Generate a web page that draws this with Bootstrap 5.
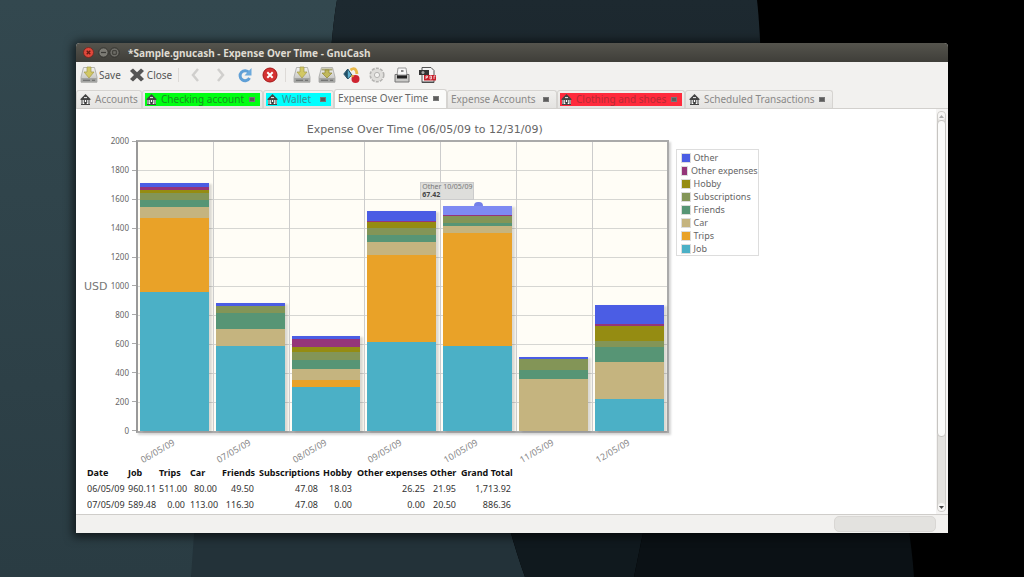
<!DOCTYPE html>
<html lang="en">
<head>
<meta charset="utf-8">
<meta name="viewport" content="width=device-width, initial-scale=1">
<title>*Sample.gnucash - Expense Over Time - GnuCash</title>
<link href="https://cdn.jsdelivr.net/npm/bootstrap@5.3.0/dist/css/bootstrap.min.css" rel="stylesheet">
<style>
  :root {
    --job: #4bb0c6; --trips: #e9a228; --car: #c5b47f; --friends: #579575;
    --subs: #839557; --hobby: #958c12; --otherexp: #953579; --other: #4b5de4;
  }
  body { background: #000; font-family: "Noto Sans", "Open Sans", sans-serif; font-size: 10px; line-height: 14px; color: #666; }
  .desktop { min-height: 100vh; padding: 43px 76px 44px; position: relative; }
  .wallpaper { position: absolute; inset: 0; width: 100%; height: 100%; }
  .app-window { background: #f2f1ef; border-radius: 4px 4px 0 0; box-shadow: 0 1px 10px 3px rgba(0,0,0,.6); }
  .title-strip { height: 19px; background: linear-gradient(#55544d, #3f3e39); border-radius: 4px 4px 0 0; color: #dfdbd2; font-weight: 700; padding-left: 7px; font-size: 10px; }
  .win-btn { width: 11px; height: 11px; border: 0; padding: 0; background: none; display: flex; }
  .tool-strip { height: 27px; padding: 0 0 2px 4px; display: flex; align-items: center; }
  .tool-btn { border: 0; background: none; padding: 0; color: #555; font-size: 10px; line-height: 14px; display: flex; align-items: center; gap: 1px; }
  .tool-btn svg { width: 18px; height: 18px; }
  .tool-btn.bare { width: 25px; justify-content: center; flex: none; }
  .tool-btn.second { margin-left: 7px; }
  .tool-rule { width: 1px; height: 14px; background: #dddad7; margin: 0 3px; }
  .tool-rule.wide { margin-left: 6px; }
  .tab-strip { display: grid; grid-template-columns: 66px 121px 71px 113px 110px 128px 148px; height: 20px; border-bottom: 1px solid #d2d0cd; }
  .page-tab { border: 1px solid #d6d4d1; border-bottom: 0; border-radius: 3px 3px 0 0; background: linear-gradient(#f1f0ee, #e4e3e1); padding: 2px 2px; margin-top: 1px; color: #8a8988; font-size: 10px; line-height: 13px; white-space: nowrap; display: flex; text-align: left; min-width: 0; }
  .page-tab .fill { display: flex; align-items: center; justify-content: space-between; flex: 1; min-width: 0; padding: 0 4px 0 1px; height: 13px; }
  .page-tab .fill > span { display: flex; align-items: center; gap: 4px; }
  .page-tab.current { background: #fbfbfa; color: #666; margin-top: 0; }
  .page-tab svg { width: 11px; height: 11px; }
  .page-tab .green-fill { background: #00ff12; color: #16921f; }
  .page-tab .cyan-fill { background: #00ffff; color: #3b8f94; }
  .page-tab .red-fill { background: #ff2a3c; color: #b52a35; }
  .tab-x { width: 6px; height: 5px; background: #5c5c5c; border: 1px solid #777; margin-right: 1px; flex: none; }
  .report { background: #fff; padding: 11px 0 0 8px; min-width: 0; overflow: hidden; }
  .figure-box { width: 80%; margin: 0; }
  .chart-title { font: 11px/20px "DejaVu Sans", sans-serif; height: 20px; text-align: center; color: #666; white-space: nowrap; }
  .y-name { width: 23px; font: 11px/14px "DejaVu Sans", sans-serif; color: #777; }
  .y-axis { width: 29px; height: 318px; margin-top: -13px; margin-bottom: -16px; font-size: 8px; line-height: 10px; }
  .y-axis div { flex: 1; display: flex; align-items: center; justify-content: flex-end; gap: 3px; }
  .y-axis div::after { content: ""; width: 4px; height: 1px; background: #aaa; }
  .plot { position: relative; border: 2px solid #aaa; border-left-color: #999; background: #fffdf6; height: 293px; box-shadow: 2px 2px 2px rgba(0,0,0,.16); }
  .h-lines { position: absolute; inset: 0; }
  .h-lines div { flex: 1; border-bottom: 1px solid #d6d6d2; }
  .h-lines div:last-child { border: 0; }
  .bars { display: grid; grid-template-columns: repeat(7, 1fr); height: 289px; position: relative; margin: 0 -1px; }
  .slot { border-left: 1px solid #ccc; padding: 0 4px 0 2px; display: flex; flex-direction: column; justify-content: flex-end; position: relative; }
  .slot:first-child { border-color: transparent; }
  .stack { display: flex; flex-direction: column; height: calc(var(--sum) / 2000 * 100%); box-shadow: 3px 1px 2px rgba(0,0,0,.14); }
  .seg { flex: var(--v) 0 0; }
  .c-job { background: var(--job); } .c-trips { background: var(--trips); } .c-car { background: var(--car); }
  .c-friends { background: var(--friends); } .c-subs { background: var(--subs); } .c-hobby { background: var(--hobby); }
  .c-otherexp { background: var(--otherexp); } .c-other { background: var(--other); } .c-hover { background: #7e8af2; }
  .point-tip { position: absolute; left: -21px; bottom: 80%; width: 54px; border: 1px solid #ccc; background: rgba(218,218,216,.9); font-size: 7px; line-height: 8px; color: #777; white-space: nowrap; padding-left: 1px; z-index: 2; }
  .point-tip b { display: block; color: #444; }
  .point-dot { position: absolute; left: 33px; bottom: 78%; width: 9px; height: 4px; border-radius: 5px 5px 0 0; background: #7480e8; }
  .x-axis { display: grid; grid-template-columns: repeat(7, 1fr); height: 32px; margin-left: 53px; margin-right: 98px; font-size: 9px; line-height: 10px; color: #888; }
  .x-axis span { display: block; width: 40px; transform: rotate(-30deg); transform-origin: 0 100%; margin: 22px 0 0 7px; height: 10px; }
  .key-col { width: 90px; margin-left: 7px; padding-top: 9px; flex: none; }
  .key-box { border: 1px solid #ddd; width: 83px; padding: 1px 0 0 4px; margin: 0; list-style: none; font-size: 9px; line-height: 13px; color: #666; white-space: nowrap; }
  .key-box li { display: flex; align-items: center; gap: 3px; height: 13px; }
  .key-box i { width: 10px; height: 10px; border: 1px solid #ddd; }
  .sums { table-layout: fixed; width: 429px; margin: 0 0 0 3px; color: #333; font-size: 9px; line-height: 14px; white-space: nowrap; }
  .sums th, .sums td { padding: 1px 5px 1px 0; text-align: right; }
  .sums th { text-align: left; color: #111; font-weight: 700; }
  .sums td:first-child { text-align: left; }
  .scroller { width: 12px; background: #f5f4f3; padding: 2px 1px; flex: none; }
  .trough { border: 1px solid #cfcdca; border-radius: 4px; background: #e3e2df; width: 9px; }
  .trough span { height: 8px; display: flex; align-items: center; justify-content: center; background: #f7f6f5; border-radius: 4px; flex: none; }
  .trough svg { width: 5px; height: 3px; }
  .thumb { flex: 324 0 0; background: #fbfbfa; border: 1px solid #c6c4c1; border-radius: 4px; margin: 0 -1px; }
  .rest { flex: 68 0 0; }
  .status { height: 19px; border-top: 1px solid #cfcdca; padding-right: 12px; }
  .meter { width: 102px; height: 16px; border: 1px solid #d9d7d4; border-radius: 5px; background: #e3e2df; }
</style>
</head>
<body>
<svg width="0" height="0" class="position-absolute" aria-hidden="true">
  <defs>
    <linearGradient id="metal" x2="0" y2="1"><stop stop-color="#f3f3f1"/><stop offset="1" stop-color="#b9b9b6"/></linearGradient>
    <symbol id="drive" viewBox="0 0 18 18">
      <path d="M3.500 1.500h11L17 11v5.200H1V11z" fill="url(#metal)" stroke="#a5a5a3" stroke-width=".8"/>
      <path d="M1.200 12h15.600v4.300H1.200z" fill="#a3a4a2"/><path d="M3 14.200h7M12 14.200h3" stroke="#666" stroke-width="1.100"/>
    </symbol>
    <symbol id="bank" viewBox="0 0 11 11">
      <path d="M5.500 0L10.500 5H.5z" fill="#444"/><path d="M4 3.600h3" stroke="#eee"/>
      <path d="M1 5h9v6H1z" fill="#fff"/><path d="M2 5v5.500M4.300 5v4M6.700 5v4M9 5v5.500M1 10.500h9M.5 5.500h10" stroke="#444" stroke-width="1.100"/><path d="M4.300 8h2.400v3H4.300z" fill="#444"/>
    </symbol>
    <symbol id="arrow-down" viewBox="0 0 18 18"><path d="M7 1h4v5h3l-5 6-5-6h3z" fill="#d2c864" stroke="#a59b4c" stroke-width=".7"/></symbol>
  </defs>
</svg>
<div class="desktop d-flex flex-column">
  <svg class="wallpaper" viewBox="0 0 1024 577" preserveAspectRatio="none" aria-hidden="true">
    <defs>
      <linearGradient id="w1" x2="0" y2="1"><stop stop-color="#33484f"/><stop offset="1" stop-color="#2a3c43"/></linearGradient>
      <linearGradient id="w2" x2="0" y2="1"><stop stop-color="#1d2930"/><stop offset="1" stop-color="#172126"/></linearGradient>
    </defs>
    <path d="M0 0H337Q326 60 320 300L191 577H0z" fill="url(#w1)"/>
    <path d="M337 0H757Q764 60 764 300H320Q326 60 337 0z" fill="url(#w2)"/>
    <path d="M200 450H490Q508 530 525 577H191z" fill="#233239"/>
    <path d="M490 450H660L634 577H525Q508 530 490 450z" fill="#10191e"/>
    <path d="M660 450H895Q911 530 914 577H634z" fill="#0b1115"/>
  </svg>
  <main class="app-window d-flex flex-column flex-grow-1 position-relative">
    <header class="title-strip d-flex align-items-center">
      <button class="win-btn" aria-label="Close window"><svg viewBox="0 0 11 11"><circle cx="5.500" cy="5.500" r="5" fill="#e2483b" stroke="#762b24"/><path d="M3.700 3.700l3.600 3.600m0-3.600L3.700 7.300" stroke="#641b14" stroke-width="1.300"/></svg></button>
      <button class="win-btn ms-1" aria-label="Minimize"><svg viewBox="0 0 11 11"><circle cx="5.500" cy="5.500" r="4.700" fill="#7c7b74" stroke="#33322e"/><path d="M3 5.500h5" stroke="#3b3a36" stroke-width="1.200"/></svg></button>
      <button class="win-btn" aria-label="Maximize"><svg viewBox="0 0 11 11"><circle cx="5.500" cy="5.500" r="4.700" fill="#6e6d67" stroke="#33322e"/><path d="M3.700 3.700h3.600v3.600H3.700z" fill="none" stroke="#3b3a36"/></svg></button>
      <span class="ms-2 text-nowrap">*Sample.gnucash - Expense Over Time - GnuCash</span>
    </header>
    <div class="tool-strip" role="toolbar" aria-label="Main toolbar">
      <button class="tool-btn"><svg><use href="#drive"/><use href="#arrow-down"/></svg>Save</button>
      <button class="tool-btn second"><svg viewBox="0 0 18 18"><path d="M3 4l2-1.500 4 3.700L13 2.500 16 5l-4 4 4 4-3 2.500-4-3.700-4 3.700L2 13l4-4-4-4z" fill="#555"/></svg>Close</button>
      <span class="tool-rule wide"></span>
      <button class="tool-btn bare" aria-label="Back"><svg viewBox="0 0 18 18"><path d="M12 3L7 9l5 6" fill="none" stroke="#d0cfcd" stroke-width="2.500"/></svg></button>
      <button class="tool-btn bare" aria-label="Forward"><svg viewBox="0 0 18 18"><path d="M7 3l5 6-5 6" fill="none" stroke="#d0cfcd" stroke-width="2.500"/></svg></button>
      <button class="tool-btn bare" aria-label="Reload"><svg viewBox="0 0 18 18"><path d="M13 6.500A5 5 0 1 0 13.500 12" fill="none" stroke="#5f9fd6" stroke-width="3"/><path d="M15.500 2v7.500H8.500z" fill="#6ba9dc"/></svg></button>
      <button class="tool-btn bare" aria-label="Stop"><svg viewBox="0 0 18 18"><circle cx="9" cy="9" r="7" fill="#d43232" stroke="#a31616"/><path d="M6.300 6.300l5.400 5.400m0-5.400l-5.400 5.400" stroke="#fff" stroke-width="2"/></svg></button>
      <span class="tool-rule"></span>
      <button class="tool-btn bare" aria-label="Save config"><svg><use href="#drive"/><use href="#arrow-down"/></svg></button>
      <button class="tool-btn bare" aria-label="Save config as"><svg><use href="#drive"/><path d="M3.500 2.500h11v2h-11z" fill="#a9a678"/><path d="M7 4h4v3h3l-5 5-5-5h3z" fill="#c0b85c" stroke="#918734" stroke-width=".7"/></svg></button>
      <button class="tool-btn bare" aria-label="Options"><svg viewBox="0 0 18 18"><path d="M.8 8l4-5 4 6-4 4z" fill="#5fb0cf" stroke="#244d60"/><path d="M4.800 3v10l-3.500-5z" fill="#234f66"/><path d="M7.500 4q5.500-4 6.500 4" fill="none" stroke="#e8b848" stroke-width="2.800"/><circle cx="12.500" cy="13" r="4" fill="#ce2430"/><circle cx="9.500" cy="10" r="1.300" fill="#d8a33a"/></svg></button>
      <button class="tool-btn bare" aria-label="Settings"><svg viewBox="0 0 18 18"><circle cx="9" cy="9" r="6.500" fill="#dfdedb" stroke="#b5b4b2" stroke-width="2.200" stroke-dasharray="3 1.100"/><circle cx="9" cy="9" r="6" fill="#dfdedb"/><circle cx="9" cy="9" r="2.600" fill="#f3f2f0" stroke="#b5b4b2"/></svg></button>
      <button class="tool-btn bare" aria-label="Print"><svg viewBox="0 0 18 18"><path d="M5 2h8l1 7H4z" fill="#f7f7f7" stroke="#999"/><path d="M8 4h2.500v2H8z" fill="#888"/><path d="M2 8.500h2.500V10h9V8.500H16V16H2z" fill="#c9c9c7" stroke="#777"/><path d="M4 9.500h10v3H4z" fill="#222"/></svg></button>
      <button class="tool-btn bare" aria-label="Export as PDF"><svg viewBox="0 0 18 18"><path d="M4 1.500h9l3 3v12H4z" fill="#f4f4f4" stroke="#555"/><path d="M1 4h10v5H1z" fill="#333"/><circle cx="5" cy="6.500" r="1.500" fill="#aaa"/><path d="M6 9h12v5.500H6z" fill="#c5202b"/><path d="M8 13v-3h1.500v1.500H8M12 10v3h1.500v-3zM16 13v-3h1.500" fill="none" stroke="#fff" stroke-width=".7"/><path d="M4 16h12" stroke="#444"/></svg></button>
    </div>
    <div class="tab-strip" role="tablist">
      <button class="page-tab" role="tab"><span class="fill"><span><svg><use href="#bank"/></svg>Accounts</span></span></button>
      <button class="page-tab" role="tab"><span class="fill green-fill"><span><svg><use href="#bank"/></svg>Checking account</span><i class="tab-x"></i></span></button>
      <button class="page-tab" role="tab"><span class="fill cyan-fill"><span><svg><use href="#bank"/></svg>Wallet</span><i class="tab-x"></i></span></button>
      <button class="page-tab current" role="tab" aria-selected="true"><span class="fill"><span>Expense Over Time</span><i class="tab-x"></i></span></button>
      <button class="page-tab" role="tab"><span class="fill"><span>Expense Accounts</span><i class="tab-x"></i></span></button>
      <button class="page-tab" role="tab"><span class="fill red-fill"><span><svg><use href="#bank"/></svg>Clothing and shoes</span><i class="tab-x"></i></span></button>
      <button class="page-tab" role="tab"><span class="fill"><span><svg><use href="#bank"/></svg>Scheduled Transactions</span><i class="tab-x"></i></span></button>
    </div>
    <div class="d-flex flex-grow-1">
      <section class="report flex-grow-1">
        <figure class="figure-box">
          <figcaption class="chart-title">Expense Over Time (06/05/09 to 12/31/09)</figcaption>
          <div class="d-flex align-items-start">
            <div class="y-name align-self-center">USD</div>
            <div class="y-axis d-flex flex-column">
              <div>2000</div><div>1800</div><div>1600</div><div>1400</div><div>1200</div><div>1000</div><div>800</div><div>600</div><div>400</div><div>200</div><div>0</div>
            </div>
            <div class="plot flex-grow-1">
              <div class="h-lines d-flex flex-column"><div></div><div></div><div></div><div></div><div></div><div></div><div></div><div></div><div></div><div></div></div>
              <div class="bars">
                <div class="slot"><div class="stack" style="--sum:1714"><div class="seg c-other" style="--v:22"></div><div class="seg c-otherexp" style="--v:26"></div><div class="seg c-hobby" style="--v:18"></div><div class="seg c-subs" style="--v:47"></div><div class="seg c-friends" style="--v:50"></div><div class="seg c-car" style="--v:80"></div><div class="seg c-trips" style="--v:511"></div><div class="seg c-job" style="--v:960"></div></div></div>
                <div class="slot"><div class="stack" style="--sum:886"><div class="seg c-other" style="--v:20"></div><div class="seg c-subs" style="--v:47"></div><div class="seg c-friends" style="--v:116"></div><div class="seg c-car" style="--v:113"></div><div class="seg c-job" style="--v:590"></div></div></div>
                <div class="slot"><div class="stack" style="--sum:657"><div class="seg c-other" style="--v:17"></div><div class="seg c-otherexp" style="--v:62"></div><div class="seg c-hobby" style="--v:31"></div><div class="seg c-subs" style="--v:54"></div><div class="seg c-friends" style="--v:64"></div><div class="seg c-car" style="--v:73"></div><div class="seg c-trips" style="--v:48"></div><div class="seg c-job" style="--v:308"></div></div></div>
                <div class="slot"><div class="stack" style="--sum:1526"><div class="seg c-other" style="--v:75"></div><div class="seg c-otherexp" style="--v:5"></div><div class="seg c-hobby" style="--v:41"></div><div class="seg c-subs" style="--v:49"></div><div class="seg c-friends" style="--v:48"></div><div class="seg c-car" style="--v:90"></div><div class="seg c-trips" style="--v:602"></div><div class="seg c-job" style="--v:616"></div></div></div>
                <div class="slot"><div class="point-tip">Other 10/05/09<b>67.42</b></div><i class="point-dot"></i><div class="stack" style="--sum:1559"><div class="seg c-hover" style="--v:67"></div><div class="seg c-otherexp" style="--v:4"></div><div class="seg c-subs" style="--v:45"></div><div class="seg c-friends" style="--v:24"></div><div class="seg c-car" style="--v:52"></div><div class="seg c-trips" style="--v:779"></div><div class="seg c-job" style="--v:588"></div></div></div>
                <div class="slot"><div class="stack" style="--sum:515"><div class="seg c-other" style="--v:17"></div><div class="seg c-subs" style="--v:79"></div><div class="seg c-friends" style="--v:59"></div><div class="seg c-car" style="--v:360"></div></div></div>
                <div class="slot"><div class="stack" style="--sum:871"><div class="seg c-other" style="--v:131"></div><div class="seg c-otherexp" style="--v:13"></div><div class="seg c-hobby" style="--v:101"></div><div class="seg c-subs" style="--v:45"></div><div class="seg c-friends" style="--v:103"></div><div class="seg c-car" style="--v:257"></div><div class="seg c-job" style="--v:221"></div></div></div>
              </div>
            </div>
            <div class="key-col">
              <ul class="key-box">
                <li><i class="c-other"></i>Other</li><li><i class="c-otherexp"></i>Other expenses</li><li><i class="c-hobby"></i>Hobby</li><li><i class="c-subs"></i>Subscriptions</li><li><i class="c-friends"></i>Friends</li><li><i class="c-car"></i>Car</li><li><i class="c-trips"></i>Trips</li><li><i class="c-job"></i>Job</li>
              </ul>
            </div>
          </div>
          <div class="x-axis"><span>06/05/09</span><span>07/05/09</span><span>08/05/09</span><span>09/05/09</span><span>10/05/09</span><span>11/05/09</span><span>12/05/09</span></div>
        </figure>
        <table class="sums">
          <colgroup><col width="41"><col width="31"><col width="31"><col width="32"><col width="37"><col width="64"><col width="34"><col width="73"><col width="31"><col width="55"></colgroup>
          <thead><tr><th>Date</th><th>Job</th><th>Trips</th><th>Car</th><th>Friends</th><th>Subscriptions</th><th>Hobby</th><th>Other expenses</th><th>Other</th><th>Grand Total</th></tr></thead>
          <tbody>
            <tr><td>06/05/09</td><td>960.11</td><td>511.00</td><td>80.00</td><td>49.50</td><td>47.08</td><td>18.03</td><td>26.25</td><td>21.95</td><td>1,713.92</td></tr>
            <tr><td>07/05/09</td><td>589.48</td><td>0.00</td><td>113.00</td><td>116.30</td><td>47.08</td><td>0.00</td><td>0.00</td><td>20.50</td><td>886.36</td></tr>
          </tbody>
        </table>
      </section>
      <div class="scroller d-flex" aria-hidden="true">
        <div class="trough d-flex flex-column">
          <span><svg viewBox="0 0 5 3"><path d="M0 3h5L2.500 0z" fill="#aaa"/></svg></span>
          <div class="thumb"></div><div class="rest"></div>
          <span><svg viewBox="0 0 5 3"><path d="M0 0h5L2.500 3z" fill="#444"/></svg></span>
        </div>
      </div>
    </div>
    <footer class="status d-flex align-items-center justify-content-end"><div class="meter"></div></footer>
  </main>
</div>
<script src="https://cdn.jsdelivr.net/npm/bootstrap@5.3.0/dist/js/bootstrap.bundle.min.js"></script>
</body>
</html>
